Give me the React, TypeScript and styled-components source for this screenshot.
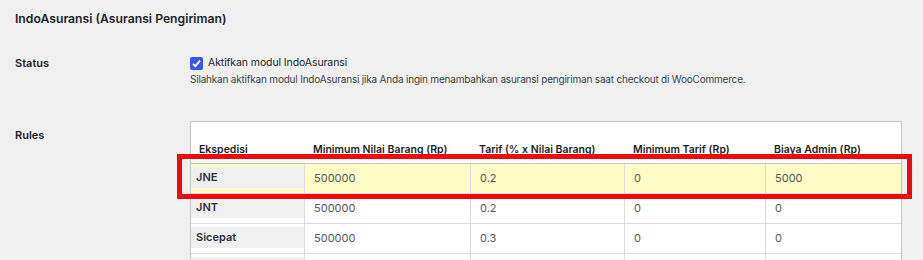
import React from 'react';
import styled, { createGlobalStyle } from 'styled-components';

type Rule = {
  courier: string;
  minValue: string;
  rate: string;
  minRate: string;
  adminFee: string;
  highlight?: boolean;
  clipped?: boolean;
};

const rules: Rule[] = [
  { courier: 'JNE', minValue: '500000', rate: '0.2', minRate: '0', adminFee: '5000', highlight: true },
  { courier: 'JNT', minValue: '500000', rate: '0.2', minRate: '0', adminFee: '0', clipped: true },
  { courier: 'Sicepat', minValue: '500000', rate: '0.3', minRate: '0', adminFee: '0' },
  { courier: '', minValue: '', rate: '', minRate: '', adminFee: '' },
];

const headers = [
  { label: 'Ekspedisi', width: 113 },
  { label: 'Minimum Nilai Barang (Rp)', width: 166 },
  { label: 'Tarif (% x Nilai Barang)', width: 154 },
  { label: 'Minimum Tarif (Rp)', width: 141 },
  { label: 'Biaya Admin (Rp)', width: 136 },
];

const App = () => {
  return (
    <>
      <GlobalStyle />
      <Page>
        <Title>IndoAsuransi (Asuransi Pengiriman)</Title>

        <StatusRow>
          <Label>Status</Label>
          <Field>
            <CheckLine>
              <CheckBox>
                <svg width="11" height="11" viewBox="0 0 12 12">
                  <path d="M2.2 6.3 L4.8 8.9 L9.8 2.8" fill="none" stroke="#fff" strokeWidth="2" />
                </svg>
              </CheckBox>
              Aktifkan modul IndoAsuransi
            </CheckLine>
            <Description>
              Silahkan aktifkan modul IndoAsuransi jika Anda ingin menambahkan asuransi pengiriman saat checkout di
              WooCommerce.
            </Description>
          </Field>
        </StatusRow>

        <RulesRow>
          <RulesLabel>Rules</RulesLabel>
          <TableWrap>
            <RulesTable>
              <thead>
                <tr>
                  {headers.map((h) => (
                    <HeadCell key={h.label} style={{ width: h.width }}>
                      {h.label}
                    </HeadCell>
                  ))}
                </tr>
              </thead>
              <tbody>
                {rules.map((r, i) => (
                  <Row key={i} $highlight={r.highlight}>
                    <CourierCell>
                      <CourierName>{r.courier}</CourierName>
                    </CourierCell>
                    {[r.minValue, r.rate, r.minRate, r.adminFee].map((v, j) => (
                      <ValueCell key={j}>
                        <Value $clipped={r.clipped}>{v}</Value>
                      </ValueCell>
                    ))}
                  </Row>
                ))}
              </tbody>
            </RulesTable>
            <Highlight />
          </TableWrap>
        </RulesRow>
      </Page>
    </>
  );
};

const GlobalStyle = createGlobalStyle`
  html, body {
    margin: 0;
    padding: 0;
    background: #f0f0f1;
  }
  body {
    font-family: Inter, "Noto Sans", "Liberation Sans", sans-serif;
    color: #1d2327;
    -webkit-font-smoothing: antialiased;
  }
  * {
    box-sizing: border-box;
  }
`;

const Page = styled.div`
  height: 260px;
  overflow: hidden;
  padding: 10px 0 0 15px;
`;

const Title = styled.h2`
  margin: 0;
  font-size: 12.2px;
  line-height: 18px;
  font-weight: 600;
  color: #1d2327;
`;

const StatusRow = styled.div`
  display: grid;
  grid-template-columns: 175px 1fr;
  margin-top: 28px;
`;

const Label = styled.div`
  font-size: 11px;
  line-height: 14px;
  font-weight: 600;
  color: #1d2327;
`;

const Field = styled.div`
  display: flex;
  flex-direction: column;
`;

const CheckLine = styled.label`
  display: flex;
  align-items: center;
  gap: 5px;
  font-size: 10.5px;
  letter-spacing: -0.1px;
  line-height: 14px;
  color: #1d2327;
`;

const CheckBox = styled.span`
  width: 13px;
  height: 13px;
  border-radius: 2px;
  background: #3858e9;
  display: flex;
  align-items: center;
  justify-content: center;
`;

const Description = styled.p`
  margin: 2px 0 0;
  font-size: 10px;
  letter-spacing: -0.2px;
  line-height: 14px;
  color: #3c434a;
`;

const RulesRow = styled.div`
  display: grid;
  grid-template-columns: 175px 1fr;
  margin-top: 35px;
`;

const RulesLabel = styled(Label)`
  padding-top: 7px;
`;

const TableWrap = styled.div`
  position: relative;
  width: 712px;
`;

const RulesTable = styled.table`
  width: 712px;
  table-layout: fixed;
  border-collapse: separate;
  border-spacing: 0;
  background: #fff;
  border: 1px solid #c3c4c7;
`;

const HeadCell = styled.th`
  height: 42px;
  padding: 0 8px 6px;
  vertical-align: bottom;
  text-align: left;
  font-size: 10.5px;
  line-height: 14px;
  font-weight: 600;
  color: #1d2327;
  border-bottom: 1px solid #c3c4c7;
  white-space: nowrap;
  &:not(:first-child) {
    padding-left: 9px;
  }
`;

const Row = styled.tr<{ $highlight?: boolean }>`
  height: 30px;
  background: ${({ $highlight }) => ($highlight ? '#fefbc7' : '#fff')};
`;

const CourierCell = styled.td`
  padding: 3px 0 5px;
  vertical-align: top;
  border-bottom: 1px solid #dcdcde;
`;

const CourierName = styled.div`
  height: 21px;
  line-height: 21px;
  padding-left: 5px;
  background: #f0f0f1;
  font-size: 11px;
  font-weight: 600;
  color: #2c3338;
`;

const ValueCell = styled.td`
  padding: 0 9px;
  vertical-align: top;
  border-left: 1px solid #dcdcde;
  border-bottom: 1px solid #dcdcde;
`;

const Value = styled.div<{ $clipped?: boolean }>`
  height: ${({ $clipped }) => ($clipped ? '18px' : '29px')};
  line-height: 29px;
  overflow: hidden;
  font-size: 11px;
  color: #50575e;
`;

const Highlight = styled.div`
  position: absolute;
  left: -13px;
  top: 33px;
  width: 735px;
  height: 45px;
  border: 5px solid #ec0b0b;
  pointer-events: none;
`;

export default App;
